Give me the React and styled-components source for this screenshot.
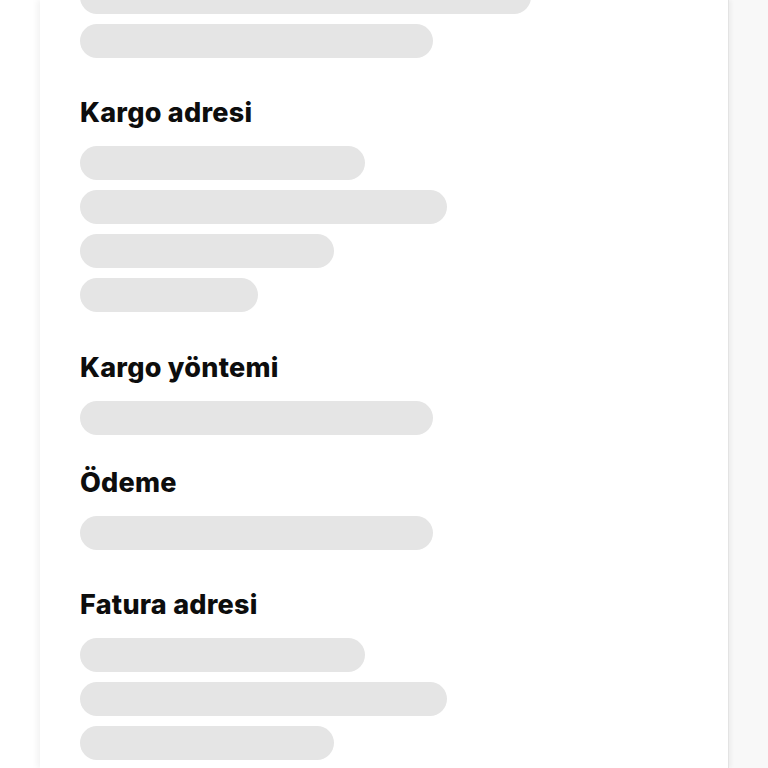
import React from "react";
import styled, { createGlobalStyle } from "styled-components";

const Global = createGlobalStyle`
  html, body { margin: 0; padding: 0; background: #ffffff; }
  body { font-family: Inter, "Noto Sans", "Liberation Sans", sans-serif; }
`;

const Page = styled.div`
  display: grid;
  grid-template-columns: 40px 688px 1fr;
  height: 768px;
  overflow: hidden;
`;

const Gutter = styled.div`
  background: ${(p) => (p.$side === "right" ? "#f8f8f8" : "#ffffff")};
`;

const Card = styled.div`
  background: #ffffff;
  box-shadow: -3px 0 6px rgba(0, 0, 0, 0.05), 1px 0 0 #e4e4e4, 3px 0 4px rgba(0, 0, 0, 0.05);
  position: relative;
  z-index: 1;
  overflow: hidden;
  padding: 0 40px;
`;

const Content = styled.div`
  margin-top: -20px;
  display: flex;
  flex-direction: column;
`;

const Section = styled.section`
  display: flex;
  flex-direction: column;
  margin-top: ${(p) => p.$gap ?? 39}px;
`;

const Heading = styled.h2`
  margin: 0 0 17px;
  font-size: 27px;
  line-height: 32px;
  font-weight: 800;
  letter-spacing: 0.25px;
  color: #0d0d0d;
`;

const Bars = styled.div`
  display: flex;
  flex-direction: column;
  gap: 10px;
`;

const Bar = styled.div`
  height: 34px;
  border-radius: 17px;
  background: #e5e5e5;
  width: ${(p) => p.$w}px;
`;

const sections = [
  { title: null, bars: [451, 353], gap: 0 },
  { title: "Kargo adresi", bars: [285, 367, 254, 178], gap: 39 },
  { title: "Kargo yöntemi", bars: [353], gap: 40 },
  { title: "Ödeme", bars: [353], gap: 32 },
  { title: "Fatura adresi", bars: [285, 367, 254, 178], gap: 39 },
];

export default function App() {
  return (
    <>
      <Global />
      <Page>
        <Gutter />
        <Card>
          <Content>
            {sections.map((s, i) => (
              <Section key={i} $gap={s.gap}>
                {s.title && <Heading>{s.title}</Heading>}
                <Bars>
                  {s.bars.map((w, j) => (
                    <Bar key={j} $w={w} />
                  ))}
                </Bars>
              </Section>
            ))}
          </Content>
        </Card>
        <Gutter $side="right" />
      </Page>
    </>
  );
}
